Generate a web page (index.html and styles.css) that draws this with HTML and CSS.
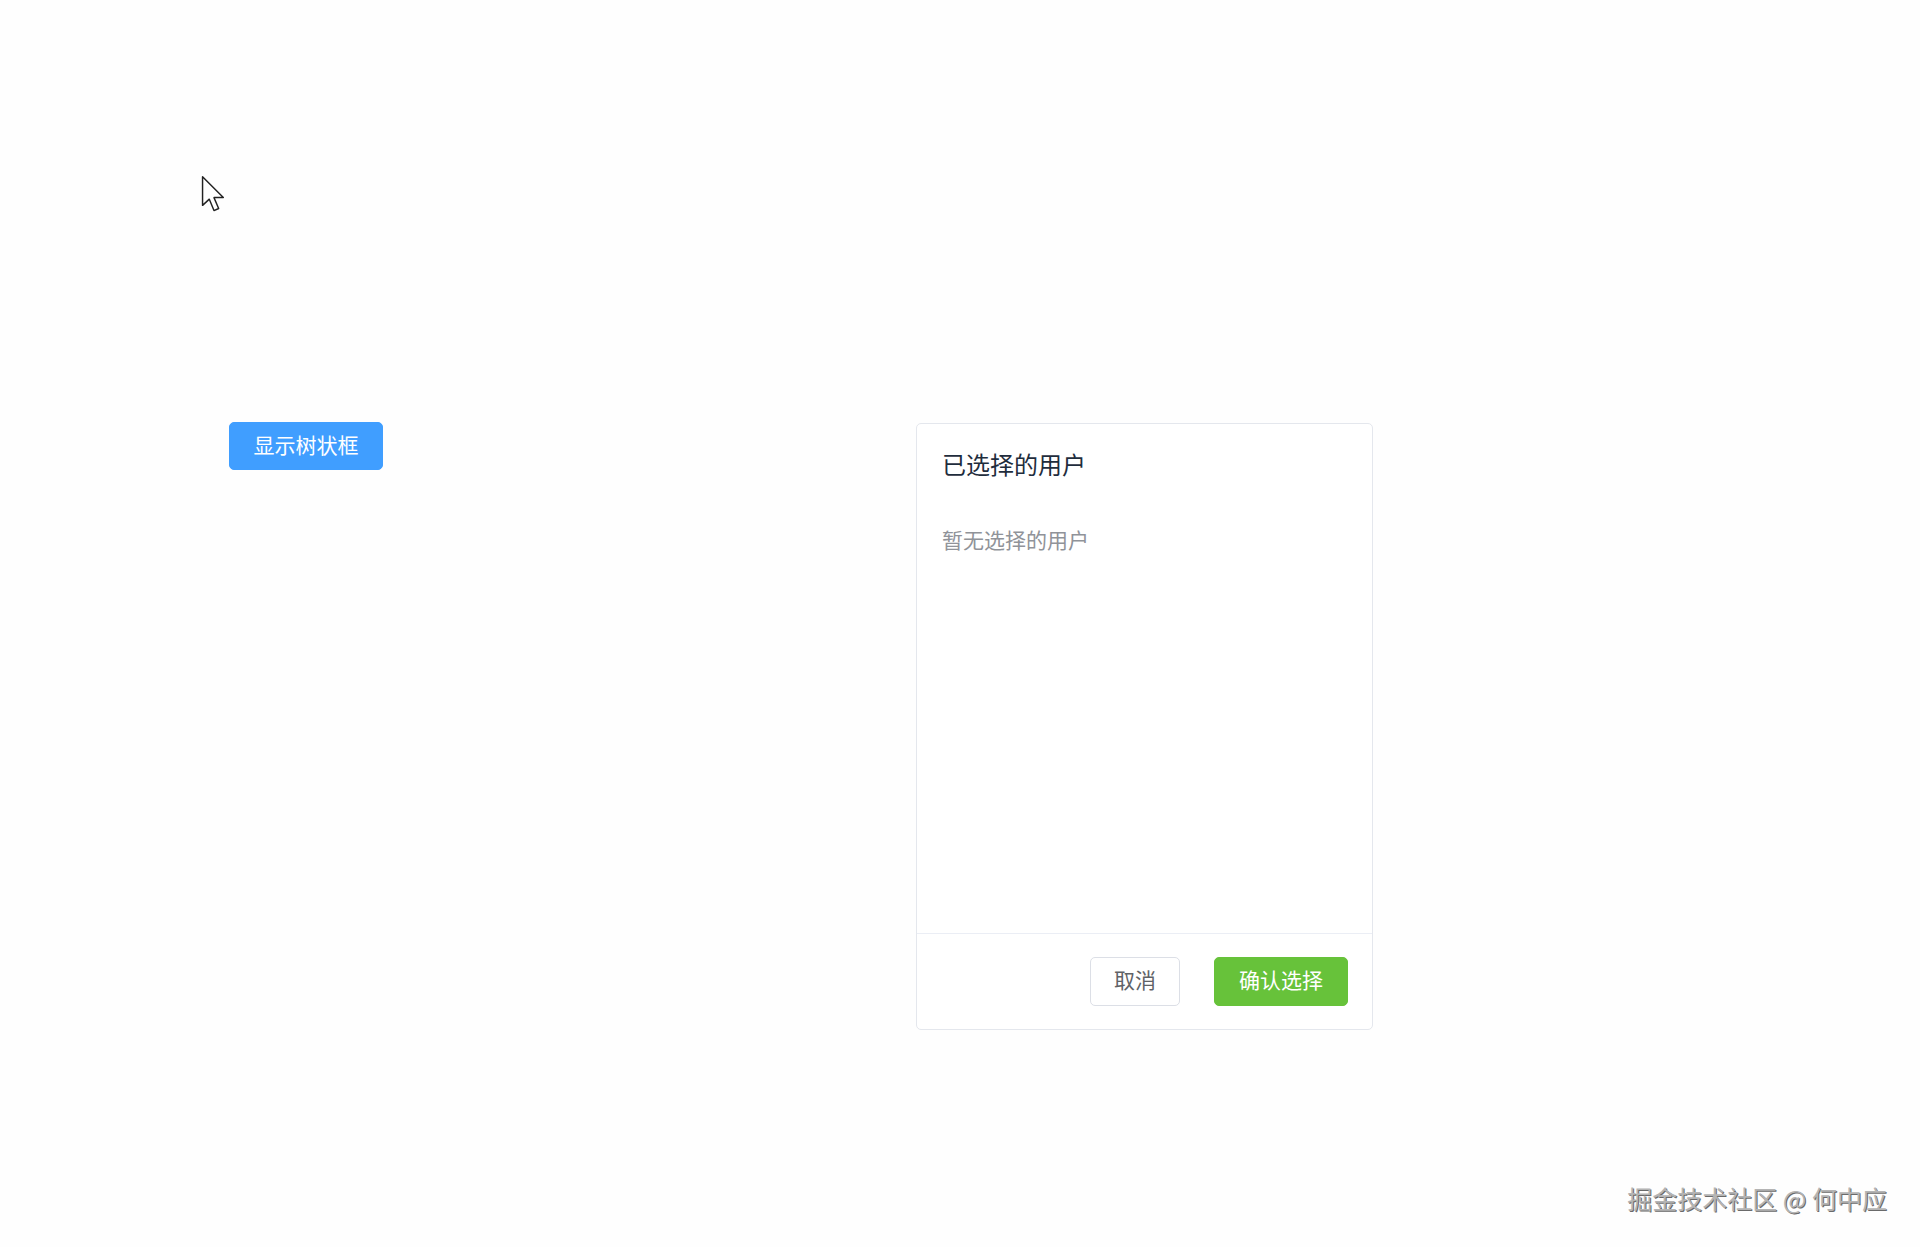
FILE: index.html
```html
<!DOCTYPE html>
<html lang="zh-CN">
<head>
    <meta charset="UTF-8">
    <meta name="viewport" content="width=device-width, initial-scale=1.0">
    <title>选择用户</title>
    <link rel="stylesheet" href="styles.css">
</head>
<body>
    <div class="page">
        <button class="btn btn-primary show-tree">显示树状框</button>

        <div class="card">
            <div class="card-body">
                <h3 class="card-title">已选择的用户</h3>
                <p class="empty-tip">暂无选择的用户</p>
            </div>
            <div class="card-footer">
                <button class="btn btn-default">取消</button>
                <button class="btn btn-success">确认选择</button>
            </div>
        </div>
    </div>

    <!-- ponteiro do mouse capturado na gravação -->
    <svg class="cursor" width="27" height="40" viewBox="0 0 26 38">
        <path d="M1.5 1.5 L1.5 29 L8 23 L12.5 34 L17 32 L12.5 21.5 L21.5 21.5 Z" fill="#fff" stroke="#222" stroke-width="1.4" stroke-linejoin="round"/>
    </svg>

    <div class="watermark">掘金技术社区 @ 何中应</div>
</body>
</html>
```

FILE: styles.css
```css
body {
    margin: 0;
    min-height: 100vh;
    background-color: #fefefe;
    font-family: "Noto Sans CJK SC", "Noto Sans", sans-serif;
}

.page {
    display: flex;
    align-items: flex-start;
    gap: 533px;
    padding: 422px 0 0 229px;
}

.btn {
    font-family: inherit;
    font-size: 21px;
    line-height: 1;
    border-radius: 5px;
    cursor: pointer;
    box-sizing: border-box;
    height: 49px;
    padding: 0 0 4px;
}
.btn-primary {
    width: 154px;
    height: 48px;
    color: #fff;
    background-color: #409eff;
    border: 1px solid #409eff;
}
.btn-default {
    width: 90px;
    color: #606266;
    background-color: #fff;
    border: 1px solid #dcdfe6;
}
.btn-success {
    width: 134px;
    color: #fff;
    background-color: #67c23a;
    border: 1px solid #67c23a;
}

.card {
    width: 457px;
    height: 607px;
    margin-top: 1px;
    display: flex;
    flex-direction: column;
    box-sizing: border-box;
    background-color: #fff;
    border: 1px solid #e4e7ed;
    border-radius: 5px;
}
.card-body {
    flex: 1;
    padding: 25px 25px;
}
.card-title {
    margin: 0;
    font-size: 24px;
    font-weight: 400;
    line-height: 30px;
    color: #1f2d3d;
}
.empty-tip {
    margin: 45px 0 0;
    font-size: 21px;
    line-height: 30px;
    color: #909399;
}
.card-footer {
    display: flex;
    justify-content: flex-end;
    gap: 34px;
    padding: 23px 24px 23px;
    border-top: 1px solid #ebeef5;
}

.cursor {
    position: absolute;
    left: 201px;
    top: 175px;
}

.watermark {
    position: absolute;
    right: 33px;
    bottom: 31px;
    font-size: 25px;
    color: #b4b4b4;
    text-shadow: 1px 1px 0 #6a6a6a;
}
```
